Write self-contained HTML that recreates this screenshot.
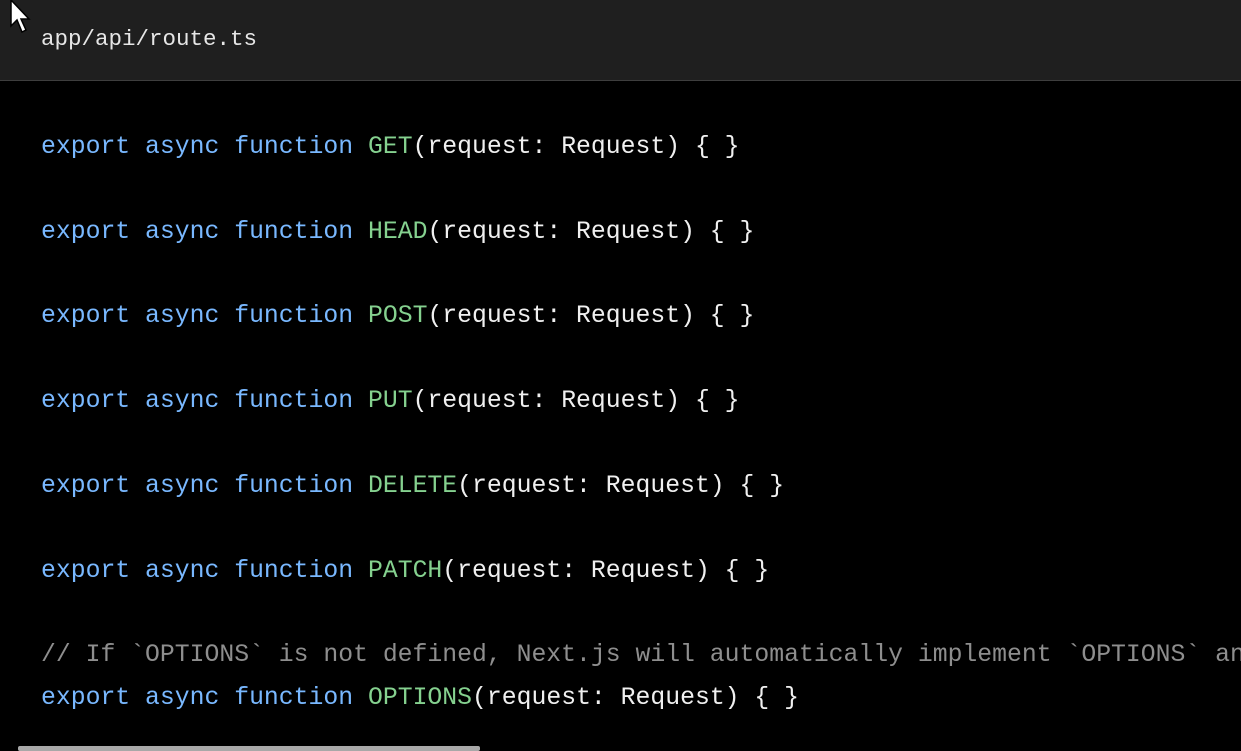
<!DOCTYPE html>
<html><head><meta charset="utf-8"><style>
html,body{margin:0;padding:0;background:#000;width:1241px;height:751px;overflow:hidden}
.hdr{position:absolute;left:0;top:0;width:1241px;height:80px;background:#1f1f1f;border-bottom:1px solid #3e3e3e}
.hdr span{position:absolute;left:41px;top:25px;font:22.5px/28px "Liberation Mono",monospace;color:#e6e6e6}
.l{position:absolute;left:41px;font:24.77px/42px "Liberation Mono",monospace;color:#f0f0f0;white-space:pre}
.k{color:#79b8ff}.f{color:#85d18f}.c{color:#8e8e8e}
.sb{position:absolute;left:18px;top:746px;width:462px;height:5px;background:#a8a8a8;border-radius:2px}
.cur{position:absolute;left:10px;top:0}
</style></head><body>
<div class="hdr"><span>app/api/route.ts</span></div>
<div class="l" style="top:126px"><span class="k">export async function</span> <span class="f">GET</span>(request: Request) { }</div>
<div class="l" style="top:211px"><span class="k">export async function</span> <span class="f">HEAD</span>(request: Request) { }</div>
<div class="l" style="top:295px"><span class="k">export async function</span> <span class="f">POST</span>(request: Request) { }</div>
<div class="l" style="top:380px"><span class="k">export async function</span> <span class="f">PUT</span>(request: Request) { }</div>
<div class="l" style="top:465px"><span class="k">export async function</span> <span class="f">DELETE</span>(request: Request) { }</div>
<div class="l" style="top:550px"><span class="k">export async function</span> <span class="f">PATCH</span>(request: Request) { }</div>
<div class="l c" style="top:634px">// If `OPTIONS` is not defined, Next.js will automatically implement `OPTIONS` and</div>
<div class="l" style="top:677px"><span class="k">export async function</span> <span class="f">OPTIONS</span>(request: Request) { }</div>
<div class="sb"></div>
<svg class="cur" width="26" height="36" viewBox="0 0 26 36"><path d="M1 0 L1 26 L7 20 L12 32 L16 30 L11 19 L19 19 Z" fill="#fff" stroke="#000" stroke-width="1.5"/></svg>
</body></html>
